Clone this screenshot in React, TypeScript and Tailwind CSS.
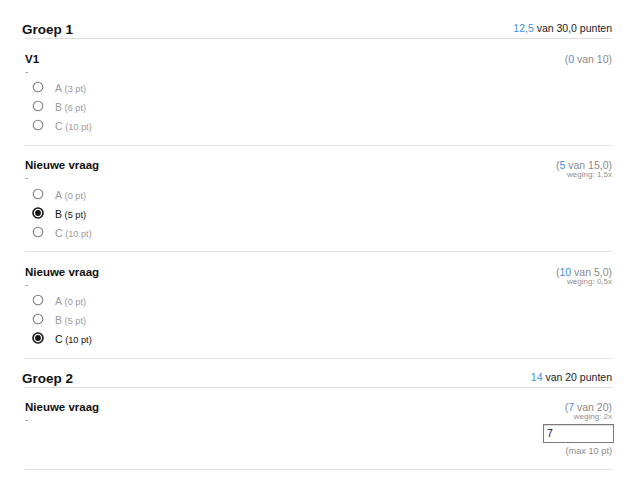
import React from "react";

type Opt = { letter: string; pts: string };

function Radio({ checked }: { checked: boolean }) {
  return checked ? (
    <svg width="12" height="12" viewBox="0 0 12 12">
      <circle cx="6" cy="6" r="5" fill="#fff" stroke="#151515" strokeWidth="1.6" />
      <circle cx="6" cy="6" r="2.9" fill="#111" />
    </svg>
  ) : (
    <svg width="12" height="12" viewBox="0 0 12 12">
      <circle cx="6" cy="6" r="4.8" fill="#fff" stroke="#808080" strokeWidth="1.1" />
    </svg>
  );
}

function GroupHeader({ title, score, total }: { title: string; score: string; total: string }) {
  return (
    <div className="flex items-end justify-between border-b border-[#dcdcdc] pt-[12px]">
      <h2 className="-ml-[3px] text-[13.5px] font-bold leading-[16px] text-[#111]">{title}</h2>
      <div className="pb-[4px] text-[10.5px] leading-[12px] text-[#1a1a1a]">
        <span className="text-[#3d8fe5]">{score}</span> van {total} punten
      </div>
    </div>
  );
}

function Question({
  title,
  score,
  max,
  weging,
  options,
  selected,
  input,
  pb = "pb-[10px]",
}: {
  title: string;
  score: string;
  max: string;
  weging?: string;
  options?: Opt[];
  selected?: number;
  input?: string;
  pb?: string;
}) {
  return (
    <div className={`flex justify-between border-b border-[#e2e2e2] pt-[12.5px] ${pb}`}>
      <div>
        <div className="text-[11.5px] font-bold leading-[14px] text-[#111]">{title}</div>
        <div className="text-[10px] leading-[12px] text-[#999]">-</div>
        {options &&
          options.map((o, i) => {
            const sel = i === selected;
            return (
              <div key={i} className="flex h-[19px] items-center pl-[7px]">
                <Radio checked={sel} />
                <span className={`ml-[11px] ${sel ? "text-[#111]" : "text-[#9a9a9a]"}`}>
                  <span className="text-[10.5px]">{o.letter}</span>
                  <span className="text-[9.2px]"> ({o.pts} pt)</span>
                </span>
              </div>
            );
          })}
      </div>
      <div className="flex flex-col items-end">
        <div className="mt-[1px] text-[10.5px] leading-[12px] text-[#8a8a8a]">
          (<span className="text-[#3d8fe5]">{score}</span> van {max})
        </div>
        {weging && (
          <div className="text-[8px] leading-[8px] text-[#8f8f8f]">weging: {weging}</div>
        )}
        {input !== undefined && (
          <>
            <div className="-mr-[2px] mt-[3px] flex h-[19px] w-[71px] items-center border border-[#7a7a7a] bg-white pl-[3px] text-[10.5px] text-[#111] shadow-[inset_0_1px_1px_rgba(0,0,0,0.15)]">
              {input}
            </div>
            <div className="mt-[2px] text-[9.2px] leading-[12px] text-[#8a8a8a]">(max 10 pt)</div>
          </>
        )}
      </div>
    </div>
  );
}

export default function App() {
  return (
    <div className="min-h-[488px] w-[636px] bg-white font-['Liberation_Sans',Arial,sans-serif]">
      <div className="ml-[25px] w-[587px] pt-[10px]">
        <GroupHeader title="Groep 1" score="12,5" total="30,0" />
        <Question
          title="V1"
          score="0"
          max="10"
          options={[
            { letter: "A", pts: "3" },
            { letter: "B", pts: "6" },
            { letter: "C", pts: "10" },
          ]}
        />
        <Question
          title="Nieuwe vraag"
          score="5"
          max="15,0"
          weging="1,5x"
          selected={1}
          options={[
            { letter: "A", pts: "0" },
            { letter: "B", pts: "5" },
            { letter: "C", pts: "10" },
          ]}
        />
        <Question
          title="Nieuwe vraag"
          score="10"
          max="5,0"
          weging="0,5x"
          selected={2}
          options={[
            { letter: "A", pts: "0" },
            { letter: "B", pts: "5" },
            { letter: "C", pts: "10" },
          ]}
        />
        <GroupHeader title="Groep 2" score="14" total="20" />
        <Question title="Nieuwe vraag" score="7" max="20" weging="2x" input="7" pb="pb-[11.5px]" />
      </div>
    </div>
  );
}
